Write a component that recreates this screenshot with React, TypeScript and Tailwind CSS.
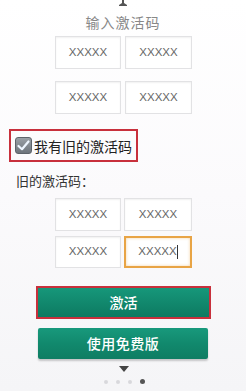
const FONT = { fontFamily: '"Noto Sans CJK SC", "Noto Sans", sans-serif' };

function CodeBox({ focused = false }: { focused?: boolean }) {
  return (
    <div
      className={
        focused
          ? 'h-full flex items-center justify-center bg-white border-2 border-[#e8a445] shadow-[inset_0_0_3px_rgba(232,164,69,0.5)] text-[11.5px] text-[#666]'
          : 'h-full flex items-center justify-center bg-white border border-[#e2e2e4] shadow-[inset_0_1px_2px_rgba(0,0,0,0.06)] text-[11.5px] text-[#666]'
      }
      style={{ fontFamily: '"Liberation Sans", Arial, sans-serif' }}
    >
      XXXXX
      {focused && <span className="w-px h-[14px] bg-[#333]" />}
    </div>
  );
}

export default function App() {
  return (
    <div
      className="w-[246px] h-[391px] overflow-hidden flex flex-col bg-gradient-to-b from-white via-[#fbfafc] to-[#f5f5f7]"
      style={FONT}
    >
      {/* top arrow stub */}
      <div className="flex justify-center h-[6px] ml-[-1px]">
        <svg width="10" height="6" viewBox="0 0 10 6">
          <path d="M4 0 H6 V3 L9 5 V6 H1 V5 L4 3 Z" fill="#555" />
        </svg>
      </div>

      <div className="mt-[7px] text-center text-[14px] leading-[18px] text-[#888] tracking-[1px]">输入激活码</div>

      <div className="mt-[5px] grid grid-cols-[66px_67px] gap-x-[4px] gap-y-[12px] ml-[55px]">
        <div className="h-[33px]"><CodeBox /></div>
        <div className="h-[33px]"><CodeBox /></div>
        <div className="h-[33px]"><CodeBox /></div>
        <div className="h-[33px]"><CodeBox /></div>
      </div>

      <div className="mt-[15px] ml-[9px] w-[129px] h-[33px] border-2 border-[#c8303c] flex items-center pl-[4px]">
        <div className="w-[17px] h-[17px] rounded-[3px] bg-gradient-to-b from-[#9aa0a6] to-[#6e757c] border border-[#5e646a] flex items-center justify-center">
          <svg width="13" height="11" viewBox="0 0 13 11">
            <path d="M1.5 6 L5 9.2 L11.5 1.5" stroke="#eef6ff" strokeWidth="2.2" fill="none" strokeLinecap="round" strokeLinejoin="round" />
          </svg>
        </div>
        <span className="ml-[2px] text-[14px] leading-[18px] text-[#222]">我有旧的激活码</span>
      </div>

      <div className="mt-[10px] ml-[16px] text-[13px] leading-[18px] text-[#333]">旧的激活码：</div>

      <div className="mt-[8px] grid grid-cols-[66px_68px] gap-x-[3px] gap-y-[5px] ml-[55px]">
        <div className="h-[33px]"><CodeBox /></div>
        <div className="h-[33px]"><CodeBox /></div>
        <div className="h-[32px]"><CodeBox /></div>
        <div className="h-[32px]"><CodeBox focused /></div>
      </div>

      <button className="mt-[18px] ml-[36px] w-[175px] h-[33px] border-2 border-[#c8303c] bg-gradient-to-b from-[#16977a] to-[#0d7a61] text-white text-[14px] font-medium flex items-center justify-center">
        激活
      </button>

      <button className="mt-[9px] ml-[38px] w-[170px] h-[31px] rounded-[2px] bg-gradient-to-b from-[#18997c] via-[#11896d] to-[#0f7d63] shadow-[0_2px_2px_rgba(0,0,0,0.2)] text-white text-[14px] font-medium flex items-center justify-center tracking-[0.5px]">
        使用免费版
      </button>

      <div className="mt-[7px] flex justify-center ml-[2px]">
        <svg width="10" height="6" viewBox="0 0 10 6">
          <path d="M0 0 H10 L5 6 Z" fill="#444" />
        </svg>
      </div>

      <div className="mt-[7px] flex items-center justify-center gap-[8px] ml-[2px]">
        <span className="w-[4px] h-[4px] rounded-full bg-[#d8d8dc]" />
        <span className="w-[4px] h-[4px] rounded-full bg-[#d8d8dc]" />
        <span className="w-[4px] h-[4px] rounded-full bg-[#d8d8dc]" />
        <span className="w-[5px] h-[5px] rounded-full bg-[#555]" />
      </div>
    </div>
  );
}
